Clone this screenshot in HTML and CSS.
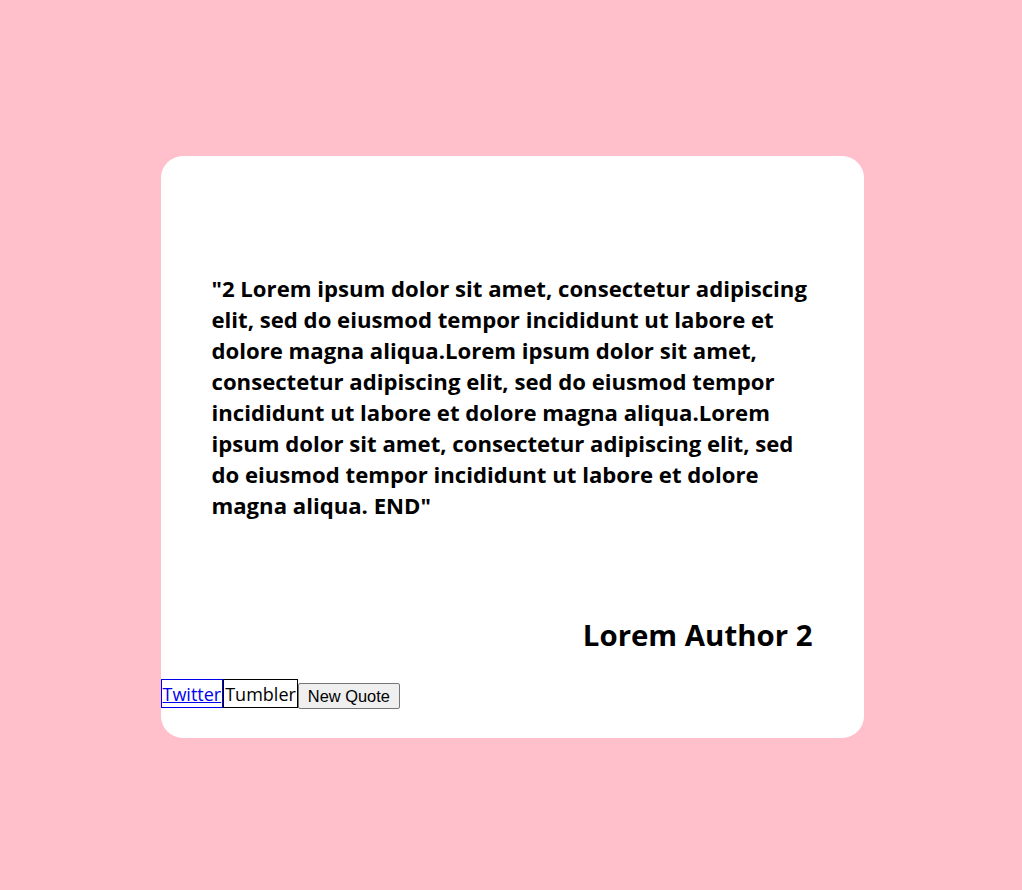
FILE: index.html
```html
<!DOCTYPE html>
<html>
<head>
<meta charset="utf-8">
<link rel="stylesheet" href="styles.css">
</head>
<body>
<div class="page">
  <div class="card">
    <p class="quote">"2 Lorem ipsum dolor sit amet, consectetur adipiscing elit, sed do eiusmod tempor incididunt ut labore et dolore magna aliqua.Lorem ipsum dolor sit amet, consectetur adipiscing elit, sed do eiusmod tempor incididunt ut labore et dolore magna aliqua.Lorem ipsum dolor sit amet, consectetur adipiscing elit, sed do eiusmod tempor incididunt ut labore et dolore magna aliqua. END"</p>
    <p class="author">Lorem Author 2</p>
    <div class="actions"><a class="share" href="#">Twitter</a><span class="share tumbler">Tumbler</span><button class="new-quote">New Quote</button></div>
  </div>
</div>
</body>
</html>
```

FILE: styles.css
```css
html, body {
  margin: 0;
  padding: 0;
}
body {
  background: #ffc0cb;
  font-family: "Open Sans", "Noto Sans", sans-serif;
}
.page {
  height: 890px;
  display: flex;
  align-items: center;
  justify-content: center;
}
.card {
  width: 703px;
  height: 582px;
  box-sizing: border-box;
  background: #ffffff;
  border-radius: 22px;
  padding-top: 117px;
  margin-left: 2px;
  margin-top: 4px;
}
.quote {
  margin: 0;
  padding: 0 51px;
  font-weight: 700;
  font-size: 22.15px;
  line-height: 31px;
  color: #000;
}
.author {
  margin: 93px 0 0;
  padding: 0 51px;
  text-align: right;
  font-weight: 700;
  font-size: 29.4px;
  line-height: 43px;
  color: #000;
}
.actions {
  margin-top: 22px;
  display: flex;
  align-items: flex-start;
}
.share {
  display: inline-block;
  font-size: 18px;
  line-height: 26px;
  border: 1px solid #000;
  color: #000;
  padding: 1px 1px 0;
  height: 26px;
  box-sizing: content-box;
}
a.share {
  color: #0000ee;
  border-color: #0000ee;
  text-decoration: underline;
}
.new-quote {
  margin-top: 4px;
  height: 26px;
  padding: 0 9px 0 9px;
  font-family: "Liberation Sans", Arial, sans-serif;
  font-size: 16.4px;
  color: #000;
  background: #efefef;
  border: 1px solid #767676;
  border-radius: 2px;
}
```
